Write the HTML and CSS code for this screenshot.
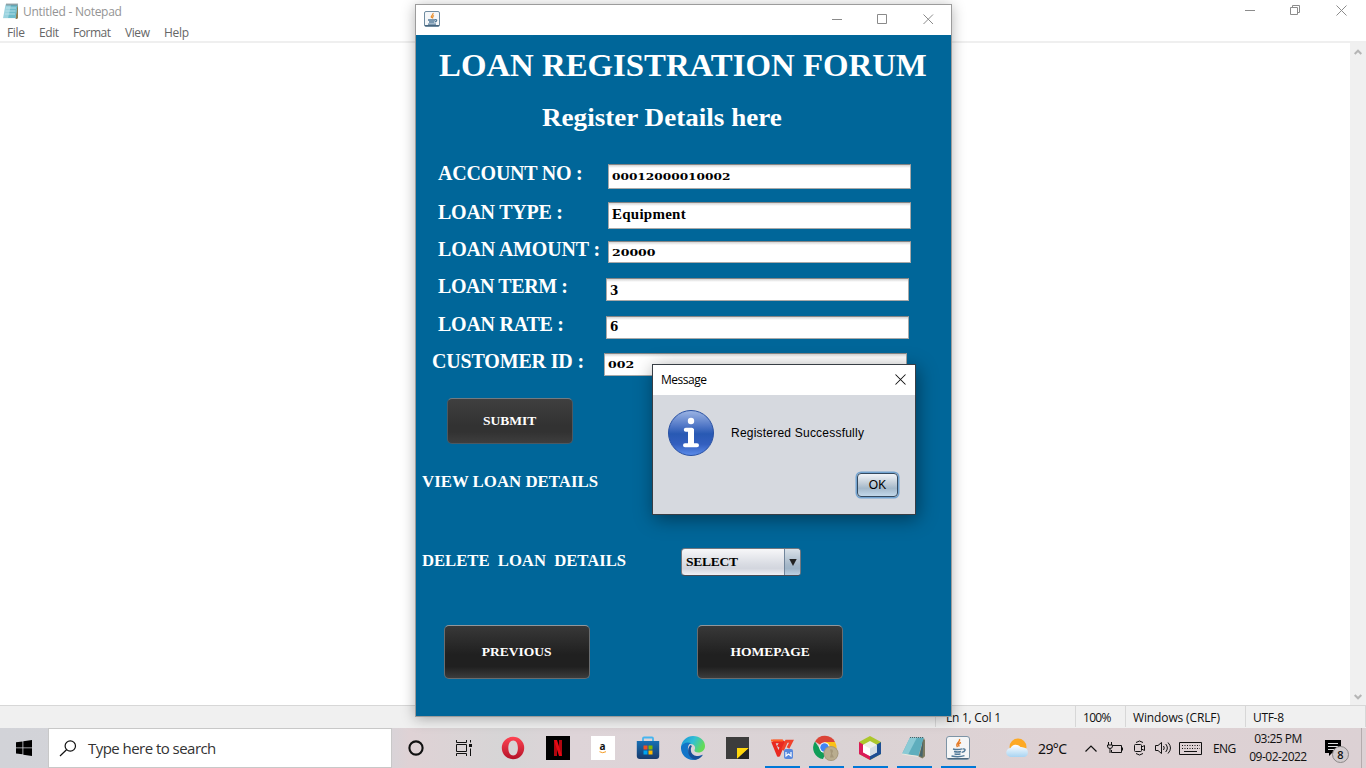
FILE: index.html
```html
<!DOCTYPE html>
<html lang="en">
<head>
<meta charset="utf-8">
<title>Loan Registration</title>
<link rel="stylesheet" href="styles.css">
</head>
<body>
<div class="desktop">
  <main class="notepad">
    <header class="np-title">
      <svg class="np-icon" width="17" height="17" viewBox="0 0 17 17"><path d="M4 2.500h12V15l-1 1H4z" fill="#8d7f55"/><path d="M3.500 1.500h12L13.500 15.500H1z" fill="#9bd3df"/><path d="M9 2h6.500L13.500 15.500H6z" fill="#6fbccb"/><path d="M1 15.500h12.500" stroke="#f2f8f8"/><path d="M4 5h10M3.500 8h10M3 11h10" stroke="#c2e6ec" stroke-width=".8"/><path d="M5 .5v2M7 .5v2M9 .5v2M11 .5v2M13 .5v2M15 .5v2" stroke="#4b5b60"/></svg>
      <span class="np-name">Untitled - Notepad</span>
      <svg class="np-controls" width="103" height="12" viewBox="0 0 103 12" fill="none" stroke="#8c8c8c"><path d="M0 6.500h10M45.500 3.500h7v7h-7zM47.500 3v-1.500h7v7H53M91.500 1.500l10 10M101.500 1.500l-10 10"/></svg>
    </header>
    <nav class="np-menu"><span class="m-file">File</span><span class="m-edit">Edit</span><span class="m-format">Format</span><span class="m-view">View</span><span class="m-help">Help</span></nav>
    <div class="np-page">
      <div class="scrollbar">
        <svg width="8" height="6" viewBox="0 0 8 6" fill="none" stroke="#b5b5b5" stroke-width="2"><path d="M.7 5L4 1.700 7.300 5"/></svg>
        <svg width="8" height="6" viewBox="0 0 8 6" fill="none" stroke="#b5b5b5" stroke-width="2"><path d="M.7 1L4 4.300 7.300 1"/></svg>
      </div>
    </div>
    <footer class="np-status"><span class="s-pos">Ln 1, Col 1</span><span class="s-zoom">100%</span><span class="s-eol">Windows (CRLF)</span><span class="s-enc">UTF-8</span></footer>
  </main>

  <section class="loan">
    <header class="loan-bar">
      <svg width="16" height="16" viewBox="0 0 16 16"><rect x=".5" y=".5" width="15" height="15" rx="1.500" fill="#f4f6f8" stroke="#6f8ba0"/><path d="M1 14.500h14" stroke="#48657d"/><g fill="none"><path d="M9 2c1 2-3 2.500-1.500 5M10 4.500C8 5.500 9 6 8.500 7.500" stroke="#e98a25" stroke-width="1.200"/><path d="M4 9h7M5 11h5M4 13.200h8M11 8.700c2.500-.4 2 2-.5 2.300" stroke="#517998" stroke-width="1.300"/></g></svg>
      <svg width="102" height="11" viewBox="0 0 102 11" fill="none" stroke="#8a8a8a"><path d="M0 5.500h10M45.500.5h9v9h-9zM91.500.5l9.500 9.500M101 .5l-9.500 9.500"/></svg>
    </header>
    <div class="loan-body">
      <h1>LOAN REGISTRATION FORUM</h1>
      <h2>Register Details here</h2>
      <div class="row r1"><label>ACCOUNT NO :</label><div class="field"><span class="num">00012000010002</span></div></div>
      <div class="row r2"><label>LOAN TYPE :</label><div class="field"><span class="word">Equipment</span></div></div>
      <div class="row r3"><label>LOAN AMOUNT :</label><div class="field"><span class="num wide">20000</span></div></div>
      <div class="row r4"><label>LOAN TERM :</label><div class="field"><span class="three">3</span></div></div>
      <div class="row r5"><label>LOAN RATE :</label><div class="field"><span class="six">6</span></div></div>
      <div class="row r6"><label>CUSTOMER ID :</label><div class="field"><span class="num wide">002</span></div></div>
      <button class="btn submit"><span>SUBMIT</span></button>
      <div class="view"><span>VIEW LOAN DETAILS</span></div>
      <div class="delete"><div><span>DELETE&nbsp; LOAN&nbsp; DETAILS</span></div>
        <div class="combo"><span>SELECT</span><i><svg width="8" height="7" viewBox="0 0 8 7"><path d="M.3 0h7.400L4 7z" fill="#222"/></svg></i></div>
      </div>
      <div class="nav"><button class="btn big"><span>PREVIOUS</span></button><button class="btn big"><span>HOMEPAGE</span></button></div>
    </div>
  </section>

  <section class="dialog">
    <header><span>Message</span><svg width="11" height="11" viewBox="0 0 11 11" stroke="#111" stroke-width="1.050"><path d="M.5.5l10 10M10.500.5l-10 10"/></svg></header>
    <div class="dlg-body">
      <svg width="48" height="48" viewBox="0 0 48 48"><defs><linearGradient id="ig" x2="0" y2="1"><stop offset="0" stop-color="#9db5e4"/><stop offset=".35" stop-color="#4f76c6"/><stop offset=".52" stop-color="#2859b3"/><stop offset=".75" stop-color="#335fbf"/><stop offset="1" stop-color="#5c8cea"/></linearGradient></defs><circle cx="24" cy="24" r="22.500" fill="url(#ig)" stroke="#2951a3"/><circle cx="24" cy="12" r="3.200" fill="#fff"/><path d="M18.800 20.800h6v15M18 36.300h12" fill="none" stroke="#fff" stroke-width="4" stroke-linecap="round" stroke-linejoin="round"/><path d="M21 20h6v16h-6z" fill="#fff"/></svg>
      <p>Registered Successfully</p>
      <button class="ok">OK</button>
    </div>
  </section>

  <footer class="taskbar">
    <div class="start"><svg width="16" height="16" viewBox="0 0 16 16"><path d="M0 2.300l6.500-.9v6H0zM7.300 1.300L16 0v7.400H7.300zM0 8.300h6.500v6L0 13.500zM7.300 8.300H16V16l-8.700-1.300z"/></svg></div>
    <div class="search"><svg width="18" height="17" viewBox="0 0 18 17" fill="none" stroke="#111" stroke-width="1.200"><circle cx="11.300" cy="6" r="5.200"/><path d="M7.500 9.800L1 16"/></svg><span>Type here to search</span></div>
    <div class="sys"><svg width="18" height="18" viewBox="0 0 18 18"><circle cx="9" cy="9" r="6.600" fill="none" stroke="#111" stroke-width="2.100"/></svg></div>
    <div class="sys"><svg width="18" height="16" viewBox="0 0 18 16" fill="none" stroke="#111"><path d="M1.500 0v2.500h10V0M1.500 4.500h10v7h-10zM1.500 16v-2.500h10V16M15.500 0v2.500M15.500 8.500V16"/><path d="M14 4h3v3h-3z" fill="#111" stroke="none"/></svg></div>
    <div class="pins">
      <span><svg width="24" height="24" viewBox="0 0 24 24"><defs><linearGradient id="op" x2="0" y2="1"><stop stop-color="#ff4453"/><stop offset="1" stop-color="#b41228"/></linearGradient></defs><path fill-rule="evenodd" d="M12 .8a11.200 11.200 0 1 0 0 22.400A11.200 11.200 0 0 0 12 .8zm.2 3.700c3 0 4.700 3.100 4.700 7.500s-1.700 7.500-4.700 7.500-4.900-3.100-4.900-7.500 1.900-7.500 4.900-7.500z" fill="url(#op)"/></svg></span>
      <span><svg width="24" height="24" viewBox="0 0 24 24"><path d="M0 0h24v24H0z"/><path d="M8 4h3v16H8zM13 4h3v16h-3z" fill="#b1060f"/><path d="M8 4h3l5 16h-3z" fill="#e50914"/></svg></span>
      <span class="amz"><b>a</b><svg width="8" height="3" viewBox="0 0 8 3"><path d="M.5.7q3 2 6.500 0" fill="none" stroke="#f59a21"/></svg></span>
      <span><svg width="24" height="24" viewBox="0 0 24 24"><defs><linearGradient id="st" x2="0" y2="1"><stop stop-color="#176fb4"/><stop offset="1" stop-color="#193a6c"/></linearGradient></defs><path d="M7 6V2.500a1 1 0 0 1 1-1h8a1 1 0 0 1 1 1V6" fill="none" stroke="#47b5ef" stroke-width="1.800"/><path d="M.8 5h22.400v15a3 3 0 0 1-3 3H3.800a3 3 0 0 1-3-3z" fill="url(#st)"/><path d="M7.500 9.500h4v4h-4z" fill="#f25022"/><path d="M12.500 9.500h4v4h-4z" fill="#7fba00"/><path d="M7.500 14.500h4v4h-4z" fill="#00a4ef"/><path d="M12.500 14.500h4v4h-4z" fill="#ffb900"/></svg></span>
      <span><svg width="24" height="24" viewBox="0 0 24 24"><defs><linearGradient id="ed" x2="1" y2=".4"><stop stop-color="#1690d8"/><stop offset=".55" stop-color="#32bfd4"/><stop offset="1" stop-color="#63db57"/></linearGradient></defs><path d="M0 11C1 4 6 0 12 0c7 0 12 4.500 12 10 0 4-3 6.500-6.500 6.500-3 0-4.500-1-4-2.500 1.700-2.700-.2-6-4-6C5 8 1 10 0 13z" fill="url(#ed)"/><path d="M0 11c1.500-4 6-5.500 10-4-4 2-4 8-1 11 3 3.500 8 3.300 12.500.5C19 22.300 15.500 24 12 24 5 24-.5 18 0 11z" fill="#1375c8"/><path d="M9.500 9C5 13 7 22 14 23.800 17.500 23.600 20 21.500 22 18.800c-5 2.500-11 1.200-12-3.600-.5-2 .1-4 .9-5.200z" fill="#174f98"/></svg></span>
      <span><svg width="23" height="22" viewBox="0 0 23 22"><path d="M0 0h23v22H0z" fill="#3c3c3c"/><path d="M11 11h12L11 22z" fill="#ffd60b"/><path d="M23 11v11H11z" fill="#252525"/></svg></span>
    </div>
    <div class="running">
      <span><svg width="24" height="24" viewBox="0 0 24 24"><path d="M3 5.500h10.500L8.500 18.500z" fill="none"/><path d="M3 5.500h9L8.500 11M3 5.500L8.500 19 14 5" fill="none" stroke="#e92920" stroke-width="3.600" stroke-linejoin="round"/><path d="M1 4.500h12" stroke="#ff6326" stroke-width="2"/><path d="M12.500 14L16.500 5.300H21.500L18 12" fill="none" stroke="#f0422b" stroke-width="3"/><rect x="14" y="13" width="9" height="10" rx="2" fill="#5888dd"/><path d="M16 16v4l2.500-2 2.500 2v-4" fill="none" stroke="#fff" stroke-width="1.200"/></svg></span>
      <span><svg width="26" height="26" viewBox="0 0 26 26"><path d="M11.500 12.500L2 6.500A11.300 11.300 0 0 1 22 7z" fill="#db4437"/><path d="M2 6.500A11.300 11.300 0 0 0 10 24l4-9-6.500-.3z" fill="#109d58"/><path d="M22 7H11.500l5 7-4 10A11.300 11.300 0 0 0 22 7z" fill="#fbc116"/><circle cx="11.500" cy="12.500" r="5.200" fill="#fff"/><circle cx="11.500" cy="12.500" r="4.200" fill="#4285f4"/><circle cx="18" cy="18.500" r="7.500" fill="#a4977b"/><circle cx="18" cy="18.500" r="6.600" fill="#b9ad8f"/><path d="M17 14.500q3-1 3 2l-1 2 2 4h-4l1-4z" fill="#a5977a"/></svg></span>
      <span><svg width="24" height="24" viewBox="0 0 24 24"><path d="M12 0l11 6v12l-11 6-11-6V6z" fill="#acc72c"/><path d="M1 6l5 3v6l6 4v5L1 18z" fill="#db1b58"/><path d="M23 6v12l-11 6v-5l6-4V9z" fill="#1d4f94"/><path d="M12 5l7 3.800v7.500L12 20l-7-3.700V8.800z" fill="#eef0e9"/><path d="M5 8.800l7 3.700V20l-7-3.700z" fill="#fff"/><path d="M12 12.500l7-3.700v7.500L12 20z" fill="#d3dde4"/></svg></span>
      <span><svg width="24" height="24" viewBox="0 0 24 24"><path d="M20 3l3 1v16l-3 2z" fill="#8e7d55"/><path d="M8 1.500h14L16.500 20 0 18z" fill="#5faebd"/><path d="M8 1.500h7L6 18.800 0 18z" fill="#8bcad5"/><path d="M0 18l16.500 2.500" fill="none" stroke="#ece9df"/><path d="M22 2l-5.500 18.500 4 2 2.500-2.500V5z" fill="#7d7b60"/><path d="M21.500 3l-4 17 3 1z" fill="#45646c"/><path d="M8 1.500h14" stroke="#4b6164" stroke-dasharray="1 1"/></svg></span>
      <span><svg width="24" height="24" viewBox="0 0 24 24"><rect x=".5" y=".5" width="23" height="23" rx="2.500" fill="#f5f6f7" stroke="#7d94a6"/><path d="M1.500 22.500h21" stroke="#4e687d"/><g fill="none"><path d="M13.500 3c1.500 3-5 4-2 8M15 6.500c-3 1.300-3 2.300-1.700 4" stroke="#e57a25" stroke-width="1.400"/><path d="M7 13q5 1.200 9-.2M8 15.500q4 1 7 0M8.500 17.800q3 1 6 0M5.500 20q7 1.500 13-.3M16.500 13c4-.7 3 3-.8 3.400" stroke="#517998" stroke-width="1.400"/></g></svg></span>
    </div>
    <div class="tray">
      <svg class="t-weather" width="23" height="20" viewBox="0 0 23 20"><defs><linearGradient id="cl" x2="0" y2="1"><stop stop-color="#fff"/><stop offset="1" stop-color="#a8d4f2"/></linearGradient></defs><circle cx="12" cy="9" r="8.500" fill="#fda924"/><path d="M5 19a4.500 4.500 0 0 1-.5-9 6 6 0 0 1 10-1 5 5 0 0 1 3 .5 4.800 4.800 0 0 1 .5 9.500z" fill="url(#cl)"/></svg>
      <span class="t-temp">29°C</span>
      <svg class="t-chev" width="12" height="7" viewBox="0 0 12 7" fill="none" stroke="#111" stroke-width="1.200"><path d="M.5 6.500L6 1l5.500 5.500"/></svg>
      <svg class="t-batt" width="16" height="12" viewBox="0 0 16 12" fill="none" stroke="#111"><path d="M5 3.500h9.500v7H4.500V8M15.500 5.500v3M1.500 0v3M4.500 0v3M.5 3h5v1q0 2.500-2.500 2.500T.5 4zM3 6.500V11"/></svg>
      <svg class="t-cam" width="12" height="16" viewBox="0 0 12 16" fill="none" stroke="#111"><rect x=".5" y="4.500" width="7" height="7" rx="1"/><path d="M7.500 7l3-1.500v5l-3-1.500M2 2.500Q5.500-.5 9 2.500M2 13.500q3.500 3 7 0"/></svg>
      <svg class="t-vol" width="17" height="14" viewBox="0 0 17 14" fill="none" stroke="#111"><path d="M.5 4.500h2.500l3.500-3v11L3 9.500H.5zM8.500 5q1.500 2 0 4M10.700 3q3.300 4 0 8M13 1.500q5 5.500 0 11"/></svg>
      <svg class="t-key" width="23" height="13" viewBox="0 0 23 13" fill="none" stroke="#111"><path d="M.5.500h22v12H.5z"/><path d="M3 3.500h18M3 6.500h18" stroke-dasharray="1 1.500"/><path d="M5 9.500h13"/></svg>
      <span class="t-lang">ENG</span>
      <div class="clock"><span class="c-time">03:25 PM</span><span class="c-date">09-02-2022</span></div>
      <div class="notes"><svg width="16" height="16" viewBox="0 0 16 16"><path d="M0 0h16v13H7l-3 3v-3H0z"/><path d="M3 3.500h10M3 6.500h10M3 9.500h6" stroke="#ddd"/></svg><b>8</b></div>
    </div>
  </footer>
</div>
</body>
</html>
```
FILE: styles.css
```css
* { box-sizing: border-box; }
body { margin: 0; font: 12px "Open Sans", "Noto Sans", sans-serif; color: #111; }
h1, h2, p { margin: 0; }
svg { display: block; flex: none; }
button { margin: 0; padding: 0; }
.desktop { position: relative; width: 1366px; height: 768px; overflow: hidden; display: flex; flex-direction: column; background: #fff; }

/* Notepad */
.notepad { height: 728px; display: flex; flex-direction: column; }
.np-title { height: 23px; display: flex; align-items: center; padding: 0 18px 0 2px; color: #949494; }
.np-name { margin-left: 4px; letter-spacing: -.27px; line-height: 23px; }
.np-controls { margin-left: auto; margin-bottom: 3px; }
.np-menu { height: 20px; display: flex; padding-left: 7px; line-height: 20px; color: #666; border-bottom: 2px solid #efefef; }
.np-menu span { white-space: nowrap; }
.m-file { width: 32px; letter-spacing: -.33px; }
.m-edit { width: 34px; letter-spacing: -.44px; }
.m-format { width: 52px; letter-spacing: -.47px; }
.m-view { width: 39px; letter-spacing: -.41px; }
.m-help { letter-spacing: -.32px; }
.np-page { flex: 1; display: flex; justify-content: flex-end; }
.scrollbar { width: 16px; background: #f0f0f0; display: flex; flex-direction: column; align-items: center; justify-content: space-between; padding: 6px 0 5px; }
.np-status { height: 23px; border-top: 1px solid #d7d7d7; background: #f0f0f0; display: flex; justify-content: flex-end; line-height: 23px; padding-bottom: 1px; }
.np-status span { border-left: 1px solid #d7d7d7; padding-left: 7px; white-space: nowrap; }
.np-status .s-pos { width: 140px; padding-left: 10px; letter-spacing: -.26px; }
.s-zoom { width: 50px; letter-spacing: -.7px; }
.s-eol { width: 120px; letter-spacing: -.13px; }
.s-enc { width: 121px; letter-spacing: -.32px; border-right: 1px solid #d7d7d7; }

/* Loan window */
.loan { position: absolute; left: 415px; top: 4px; width: 537px; height: 713px; border: 1px solid #9c9c9c; background: #069; box-shadow: 0 2px 13px rgba(0,0,0,.3); font-family: "Liberation Serif", serif; font-weight: bold; color: #fff; }
.loan-bar { height: 30px; background: #fff; display: flex; align-items: center; justify-content: space-between; padding: 0 17px 2px 8px; }
.loan-body { height: 681px; display: flex; flex-direction: column; align-items: flex-start; }
.loan h1 { height: 60px; margin-left: 23px; font-size: 32px; line-height: 61px; white-space: nowrap; transform: scaleX(1.025); transform-origin: left; }
.loan h2 { height: 69px; margin-left: 126px; font-size: 25px; line-height: 45px; white-space: nowrap; transform: scaleX(1.084); transform-origin: left; }
.row { display: flex; align-items: flex-start; padding-left: 22px; flex: none; }
.row label { width: 170px; height: 20px; font-size: 20px; line-height: 19px; letter-spacing: -.25px; white-space: nowrap; }
.field { width: 303px; background: linear-gradient(#d4d4d4, #fff 3px); border: 1px solid #a9a9a9; border-top-color: #858585; padding-left: 3px; color: #000; display: flex; align-items: center; overflow: hidden; }
.r1 { height: 38px; } .r1 .field { height: 25px; }
.r2 { height: 39px; } .r2 .field { height: 27px; } .r2 label { line-height: 20px; }
.r3 { height: 37px; } .r3 .field { height: 22px; } .r3 label { letter-spacing: -.17px; line-height: 17px; }
.r4 { height: 38px; } .r4 .field, .r5 .field, .r6 .field { height: 23px; }
.r5 { height: 37px; }
.r4 label, .r5 label { width: 168px; line-height: 17px; }
.r6 { height: 45px; padding-left: 16px; } .r6 label { width: 172px; letter-spacing: -.17px; line-height: 17px; }
.r4 label { letter-spacing: -.41px; }
.num { font: bold 10px "DejaVu Serif", serif; transform: scaleX(1.215); transform-origin: left; }
.num.wide { transform: scaleX(1.25); }
.word { font: bold 15px "Liberation Serif", serif; letter-spacing: .25px; margin-top: -2px; }
.three { font: bold 12px "DejaVu Serif", serif; padding-top: 2px; }
.six { font: bold 12px "DejaVu Serif", serif; margin-top: -2px; }
.btn { flex: none; font: bold 13px "Liberation Serif", serif; color: #fff; border-radius: 5px; }
.btn span { display: inline-block; transform: scaleX(1.04); }
.submit { width: 126px; height: 46px; margin-left: 31px; border: 1px solid #4b5963; border-top-color: #727b82; background: linear-gradient(#3f3f3f, #323232 60%, #323232 75%, #3e3e3e); }
.view { margin: 28px 0 0 6px; font-size: 16px; line-height: 20px; }
.view span { display: inline-block; transform: scaleX(1.051); transform-origin: left; }
.delete { margin: 56px 0 0 6px; height: 28px; display: flex; font-size: 16px; line-height: 26px; }
.delete > div:first-child { width: 259px; white-space: nowrap; }
.delete > div:first-child span { display: inline-block; transform: scaleX(1.04); transform-origin: left; }
.combo { width: 120px; height: 28px; display: flex; border: 1px solid #73777f; border-bottom: 1px solid #474b55; border-radius: 4px; overflow: hidden; background: linear-gradient(#f7f7f9, #d8dbe2 60%, #d3d6de 75%, #f0f1f5); color: #000; }
.combo span { flex: 1; padding-left: 4px; font-size: 13.500px; letter-spacing: -.25px; line-height: 26px; }
.combo i { width: 16px; border-left: 1px solid #71859b; display: flex; align-items: center; justify-content: center; background: linear-gradient(#d9e1e8, #a6b8c9 60%, #9fb4c7 75%, #bdd0e2); }
.nav { margin: 49px 0 0 28px; display: flex; gap: 107px; }
.big { width: 146px; height: 54px; border: 1px solid #696d70; border-top-color: #92979b; background: linear-gradient(#383838, #202020 55%, #202020 78%, #3c3c3c); }

/* Message dialog */
.dialog { position: absolute; left: 652px; top: 364px; width: 264px; height: 151px; border: 1px solid #383e45; background: #d6d9df; box-shadow: 2px 4px 18px rgba(0,0,0,.42); }
.dialog header { height: 30px; background: #fff; display: flex; align-items: center; justify-content: space-between; padding: 0 9px 1px 8px; letter-spacing: -.48px; color: #000; }
.dlg-body { height: 119px; display: grid; grid-template: 76px 43px / 78px 1fr; align-items: center; font: 12px "Liberation Sans", sans-serif; letter-spacing: .22px; color: #000; }
.dlg-body > svg { margin-left: 14px; }
.ok { grid-column: 2; justify-self: end; align-self: start; margin: 2px 17px 0 0; width: 41px; height: 24px; border: 1px solid #344a60; border-radius: 4px; background: linear-gradient(#f1f4f8, #bdcad6 45%, #a3b8ca 65%, #c2d8ea); box-shadow: 0 0 0 1.500px #73a4d1; font: 12px "Liberation Sans", sans-serif; color: #000; }

/* Taskbar */
.taskbar { height: 40px; display: flex; align-items: stretch; background: linear-gradient(90deg, #d2d3d8, #d5d4d9 28%, #dfd2d5 30%, #d6d5d6 37%, #ded4d8 42%, #dad3d5 60%, #dfd2d4 78%, #dcd1d4); }
.taskbar > div, .pins span, .running span { display: flex; align-items: center; justify-content: center; flex: none; }
.start { width: 48px; }
.taskbar .search { width: 344px; background: #fff; border: 1px solid #c8c8c8; justify-content: flex-start; padding-left: 10px; font-size: 15px; letter-spacing: -.54px; color: #333; }
.search span { margin-left: 11px; }
.sys { width: 48px; }
.pins { padding-left: 2px; }
.pins span { width: 45px; height: 40px; }
.pins .amz { flex-direction: column; background: linear-gradient(#fff, #fff) center / 24px 24px no-repeat; }
.amz b { font: bold 10px/9px "Open Sans", sans-serif; }
.running span { width: 44px; height: 40px; background: linear-gradient(#0078d7, #0078d7) center bottom / 35px 2px no-repeat; }
.taskbar .tray { width: 386px; padding-left: 26px; justify-content: flex-start; white-space: nowrap; background: linear-gradient(#b5abad, #b5abad) 381px 0 / 1px 40px no-repeat; }
.t-temp { margin-left: 9px; width: 30px; font: 14px "Noto Sans", sans-serif; letter-spacing: -.61px; }
.t-chev { margin-left: 17px; }
.t-batt { margin-left: 10px; }
.t-cam { margin: 0 -1px 0 11px; }
.t-vol { margin-left: 10px; }
.t-key { margin-left: 7px; }
.t-lang { margin-left: 11px; width: 24px; letter-spacing: -.6px; }
.clock { margin-left: 11px; width: 60px; display: flex; flex-direction: column; align-items: center; line-height: 18px; padding-bottom: 1px; letter-spacing: -.52px; }
.notes { position: relative; margin-left: 17px; }
.notes b { position: absolute; left: 7px; top: 6px; width: 17px; height: 17px; border-radius: 50%; border: 1px solid #8c8888; background: #d2cbcd; font: 600 11px/15px "Open Sans", sans-serif; text-align: center; }
```
